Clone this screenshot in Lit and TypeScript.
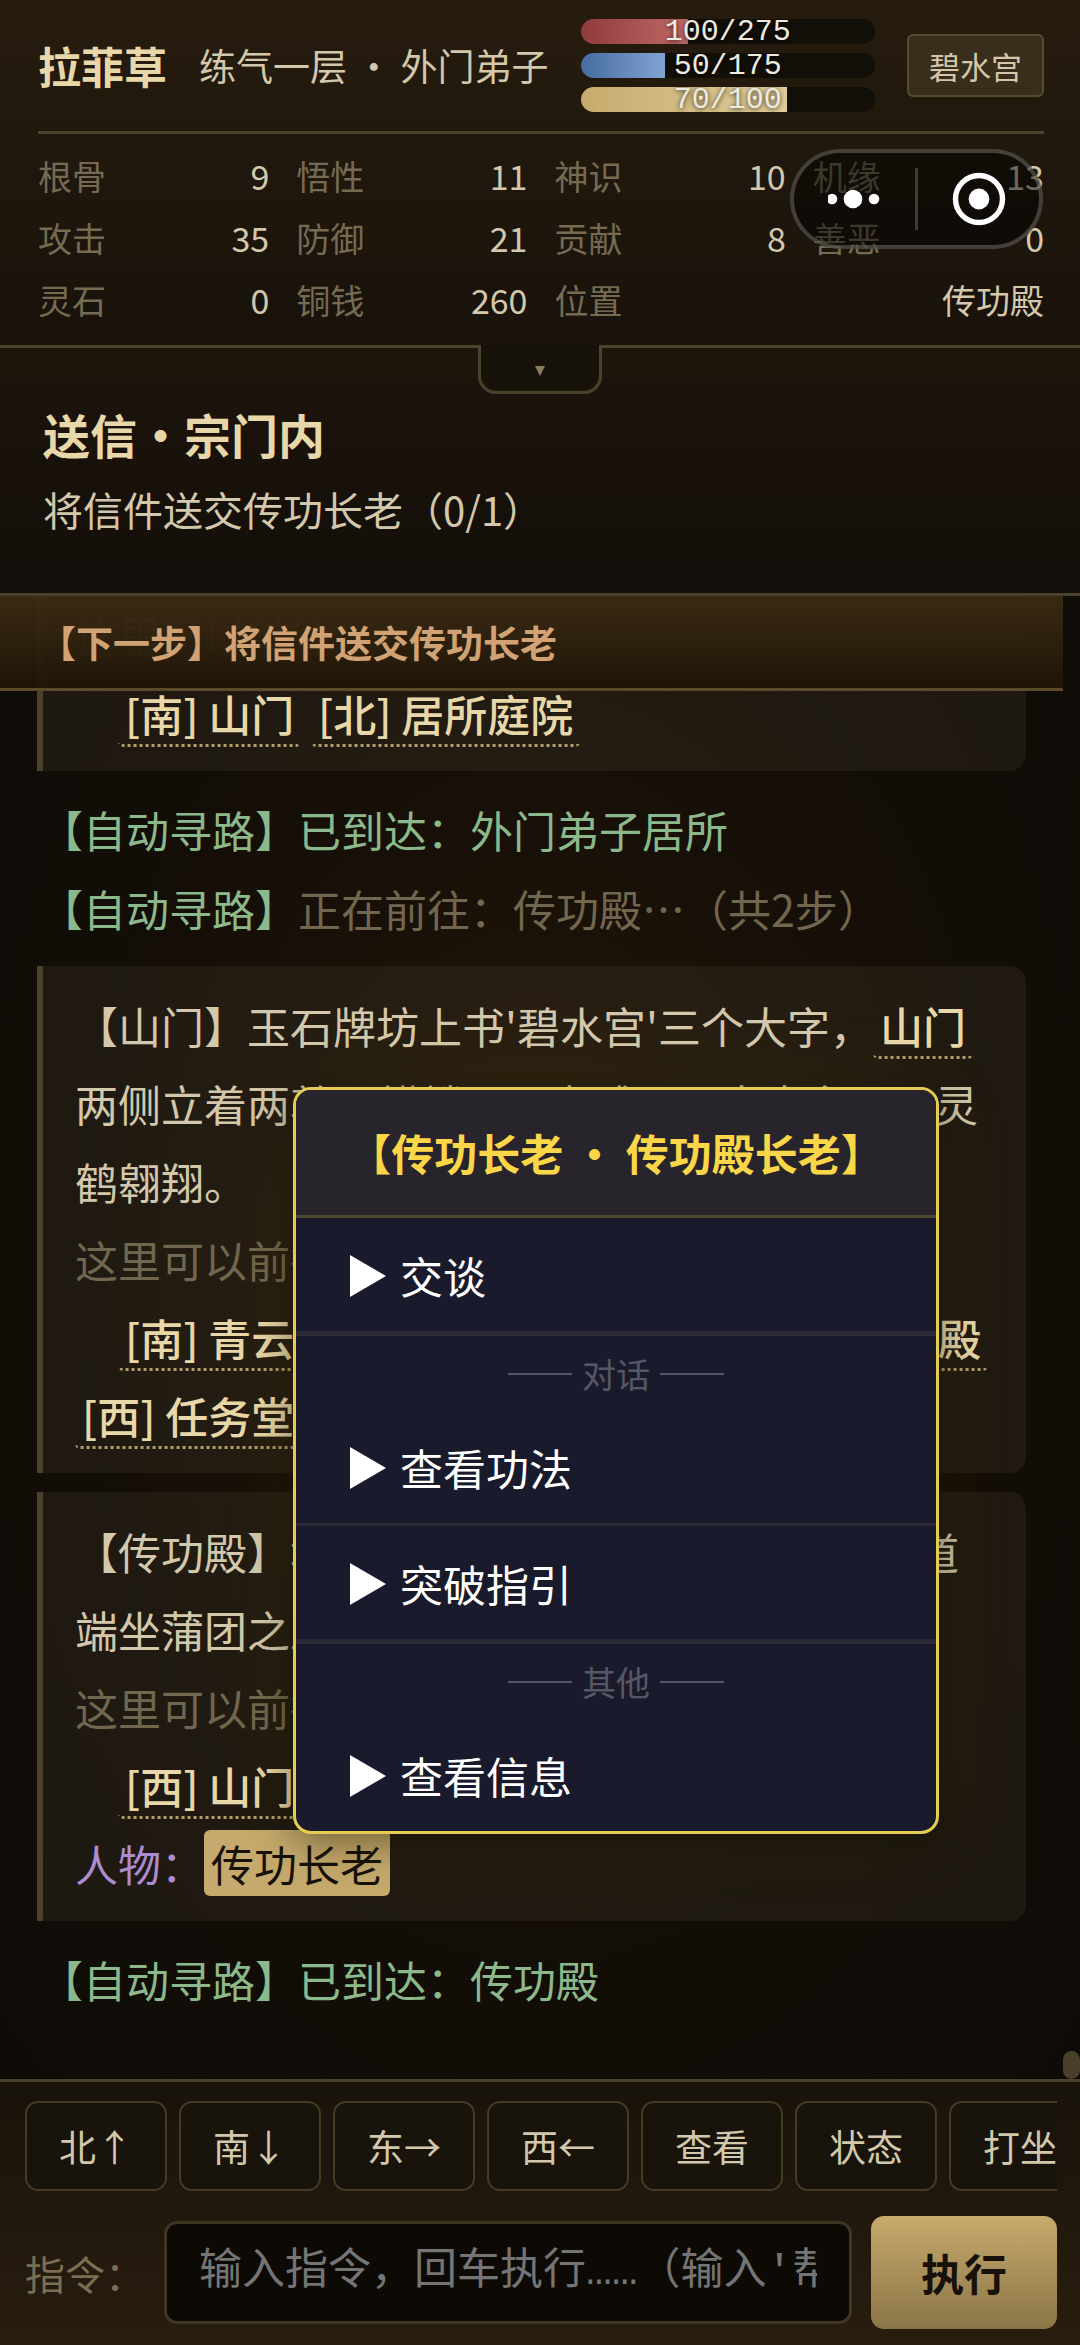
import { LitElement, html, css, svg, nothing } from "lit";
import { customElement, property, state } from "lit/decorators.js";

interface Stat {
  label: string;
  value: string;
  wide?: boolean;
}

const STATS: Stat[] = [
  { label: "根骨", value: "9" },
  { label: "悟性", value: "11" },
  { label: "神识", value: "10" },
  { label: "机缘", value: "13" },
  { label: "攻击", value: "35" },
  { label: "防御", value: "21" },
  { label: "贡献", value: "8" },
  { label: "善恶", value: "0" },
  { label: "灵石", value: "0" },
  { label: "铜钱", value: "260" },
  { label: "位置", value: "传功殿", wide: true },
];

const GAUGES = [
  { kind: "hp", name: "气血", now: 100, max: 275 },
  { kind: "mp", name: "内力", now: 50, max: 175 },
  { kind: "sp", name: "精力", now: 70, max: 100 },
];

const QUICK = ["北↑", "南↓", "东→", "西←", "查看", "状态", "打坐"];

const FONT = css`"Noto Sans CJK SC", "Noto Sans", sans-serif`;

/** Name, rank, gauges and attribute table at the top of the page. */
@customElement("player-header")
class PlayerHeader extends LitElement {
  static styles = css`
    :host {
      display: block;
      position: relative;
      z-index: 2;
      padding: 19px 36px 19px 38px;
      background: linear-gradient(#261c0e, #1f170d 55%, #18120b);
      border-bottom: 3px solid #4c422c;
    }
    .top {
      display: flex;
      align-items: center;
      gap: 32px;
      padding-bottom: 19px;
      border-bottom: 3px solid #4d432d;
    }
    .name {
      margin: 0;
      padding-bottom: 2px;
      font-size: 43px;
      line-height: 60px;
      font-weight: 700;
      color: #e8d7a8;
      white-space: nowrap;
    }
    .rank {
      padding-bottom: 2px;
      font-size: 37px;
      line-height: 60px;
      white-space: nowrap;
    }
    .gauges {
      flex: 1;
      display: flex;
      flex-direction: column;
      gap: 9px;
      min-width: 0;
    }
    .gauge {
      position: relative;
      height: 25px;
      border-radius: 13px;
      background: #120e08;
      overflow: hidden;
    }
    .fill {
      height: 100%;
    }
    .hp {
      background: linear-gradient(90deg, #8f3a3c, #c06a68);
    }
    .mp {
      background: linear-gradient(90deg, #466c9f, #80a4d2);
    }
    .sp {
      background: linear-gradient(90deg, #c6ab6e, #e0cd98);
    }
    .count {
      position: absolute;
      inset: 0;
      text-align: center;
      font: 30px/26px "Liberation Mono", monospace;
      color: #eeeae0;
      text-shadow: 0 1px 5px rgba(0, 0, 0, 0.8);
    }
    .sect {
      padding: 0 20px;
      font-size: 31px;
      line-height: 59px;
      border: 2px solid #574a31;
      border-radius: 6px;
      background: #392d1c;
      white-space: nowrap;
    }
    .stats {
      display: grid;
      grid-template-columns: repeat(4, 1fr);
      gap: 10px 27px;
      margin: 0;
      padding-top: 16px;
    }
    .stat {
      display: flex;
      justify-content: space-between;
      font-size: 34px;
      line-height: 52px;
    }
    .wide {
      grid-column: span 2;
    }
    dt {
      color: #766b52;
    }
    dd {
      margin: 0;
    }
    .fold {
      position: absolute;
      top: 100%;
      left: 50%;
      translate: -50% 0;
      display: grid;
      place-items: center;
      width: 124px;
      height: 49px;
      padding: 5px 0 0;
      background: #17120a;
      border: 3px solid #4c422c;
      border-top: 0;
      border-radius: 0 0 18px 18px;
    }
    .fold::before {
      content: "";
      position: absolute;
      inset: -3px 0 auto;
      height: 3px;
      background: #18120b;
    }
  `;

  render() {
    return html`
      <div class="top">
        <h1 class="name">拉菲草</h1>
        <span class="rank">练气一层 · 外门弟子</span>
        <div class="gauges">
          ${GAUGES.map(
            (g) => html`<div class="gauge" role="meter" aria-label=${g.name} aria-valuenow=${g.now} aria-valuemax=${g.max}>
              <div class="fill ${g.kind}" style="width:${(g.now / g.max) * 100}%"></div>
              <div class="count">${g.now}/${g.max}</div>
            </div>`
          )}
        </div>
        <span class="sect">碧水宫</span>
      </div>
      <dl class="stats">
        ${STATS.map(
          (s) => html`<div class="stat ${s.wide ? "wide" : ""}"><dt>${s.label}</dt><dd>${s.value}</dd></div>`
        )}
      </dl>
      <button class="fold" aria-label="展开">
        <svg width="10" height="10" viewBox="0 0 10 10"><path d="M0 0H10L5 10Z" fill="#8a7d60" /></svg>
      </button>
    `;
  }
}

/** Mini-program capsule floating above the header. */
@customElement("capsule-menu")
class CapsuleMenu extends LitElement {
  static styles = css`
    :host {
      display: flex;
      align-items: center;
      box-sizing: border-box;
      width: 253px;
      height: 100px;
      border: 4px solid rgba(120, 115, 105, 0.5);
      border-radius: 50px;
      background: rgba(0, 0, 0, 0.48);
    }
    button {
      flex: 1;
      height: 100%;
      display: grid;
      place-items: center;
      padding: 0;
      border: 0;
      background: none;
    }
    .bar {
      width: 3px;
      height: 62px;
      background: #403b33;
    }
  `;

  render() {
    return html`
      <button aria-label="更多">
        <svg width="54" height="20" viewBox="0 0 54 20" fill="#fff">
          <circle cx="4" cy="10" r="5.3" /><circle cx="25" cy="10" r="9.3" /><circle cx="46" cy="10" r="5.3" />
        </svg>
      </button>
      <span class="bar"></span>
      <button aria-label="关闭">
        <svg width="54" height="54" viewBox="0 0 54 54">
          <circle cx="27" cy="27" r="23.5" fill="none" stroke="#fff" stroke-width="5.4" />
          <circle cx="27" cy="27" r="10.4" fill="#fff" />
        </svg>
      </button>
    `;
  }
}

interface MenuGroup {
  title?: string;
  items: string[];
}

/** Action menu opened from a character's name. */
@customElement("npc-menu")
class NpcMenu extends LitElement {
  @property() heading = "";
  @property({ attribute: false }) groups: MenuGroup[] = [];

  static styles = css`
    :host {
      display: block;
      box-sizing: border-box;
      border: 3px solid #e6cc55;
      border-radius: 18px;
      background: #191a2b;
      overflow: hidden;
      box-shadow: 0 0 90px rgba(255, 215, 0, 0.07), 0 6px 44px rgba(0, 0, 0, 0.5);
    }
    h2 {
      margin: 0;
      padding: 23px 0 24px;
      font-size: 43px;
      line-height: 78px;
      font-weight: 700;
      text-align: center;
      color: #fad648;
      background: #27242b;
      border-bottom: 3px solid #4c462f;
    }
    .item {
      display: flex;
      align-items: center;
      gap: 14px;
      width: 100%;
      padding: 25px 54px 23px;
      border: 0;
      border-bottom: 3px solid #2a2a34;
      background: none;
      font: inherit;
      font-size: 43px;
      line-height: 65px;
      color: #fff;
      text-align: left;
    }
    .item.last {
      border-bottom: 0;
    }
    .title {
      display: flex;
      align-items: center;
      justify-content: center;
      gap: 10px;
      padding: 13px 0 11px;
      border-top: 2px solid #2e2c35;
      font-size: 34px;
      line-height: 50px;
      color: #565764;
    }
    .dash {
      width: 64px;
      height: 2px;
      background: #565764;
    }
  `;

  render() {
    return html`
      <h2>${this.heading}</h2>
      ${this.groups.map(
        (g, gi) => html`
          ${g.title
            ? html`<div class="title"><span class="dash"></span>${g.title}<span class="dash"></span></div>`
            : nothing}
          ${g.items.map(
            (name, i) => html`<button
              class="item ${gi === this.groups.length - 1 && i === g.items.length - 1 ? "last" : ""}"
            >
              ${svg`<svg width="36" height="42" viewBox="0 0 36 42"><path d="M0 0L36 21L0 42Z" fill="#fff"/></svg>`}${name}
            </button>`
          )}
        `
      )}
    `;
  }
}

@customElement("app-root")
class AppRoot extends LitElement {
  @state() private command = "";

  private groups: MenuGroup[] = [
    { items: ["交谈"] },
    { title: "对话", items: ["查看功法", "突破指引"] },
    { title: "其他", items: ["查看信息"] },
  ];

  static styles = css`
    :host {
      display: block;
      font-family: ${FONT};
      color: #d3c8ac;
      background: #0f0c07;
    }
    .page {
      position: relative;
      display: flex;
      flex-direction: column;
      min-height: 100vh;
    }
    .capsule {
      position: absolute;
      z-index: 3;
      top: 149px;
      right: 37px;
    }
    .quest {
      padding: 51px 43px 49px;
      background: linear-gradient(#1e150c, #120e09);
      border-bottom: 3px solid #4a402c;
    }
    .quest h2 {
      margin: 0;
      font-size: 47px;
      line-height: 70px;
      font-weight: 700;
      color: #e8d7a8;
    }
    .quest p {
      margin: 0;
      padding-top: 5px;
      font-size: 40px;
      line-height: 70px;
    }
    .story {
      flex: 1;
      position: relative;
      display: flex;
      background: radial-gradient(ellipse at 50% 45%, #201606 0%, #191108 35%, #120d07 65%, #0f0c07 100%);
    }
    .log {
      flex: 1;
      min-width: 0;
      overflow: hidden;
      font-size: 43px;
      line-height: 78px;
    }
    .next {
      position: relative;
      z-index: 1;
      padding: 0 39px;
      font-size: 37px;
      line-height: 92px;
      font-weight: 700;
      color: #d0a274;
      background: linear-gradient(rgba(59, 43, 19, 0.96), rgba(31, 21, 7, 0.96));
      border-bottom: 3px solid #5c4b2b;
    }
    .entries {
      display: flex;
      flex-direction: column;
      gap: 19px;
      padding: 0 37px;
    }
    .card {
      padding: 20px 32px 19px;
      border-left: 6px solid #4c422c;
      border-radius: 0 16px 16px 0;
      background: rgba(255, 235, 200, 0.055);
    }
    .scrolled {
      margin-top: -115px;
    }
    .card p,
    .lines p {
      margin: 0;
    }
    .lines {
      display: grid;
      gap: 1px;
      padding-left: 3px;
    }
    .hint {
      color: #71664e;
    }
    .sys {
      color: #8cb98b;
    }
    .who {
      color: #ab8cd0;
    }
    .link {
      padding: 0 7px;
      font-weight: 500;
      color: #e8d7a8;
      text-decoration: none;
      white-space: nowrap;
      border-bottom: 3px dotted #b59d67;
      border-radius: 5px;
    }
    .npc {
      padding: 1px 7px;
      border: 0;
      border-radius: 6px;
      background: #c6aa6d;
      color: #17110a;
      font: inherit;
      line-height: 64px;
    }
    .track {
      width: 17px;
      display: flex;
      flex-direction: column;
      justify-content: flex-end;
    }
    .thumb {
      height: 28px;
      border-radius: 9px;
      background: #4a4029;
    }
    .menu {
      position: absolute;
      z-index: 2;
      top: 491px;
      right: 141px;
      width: 646px;
    }
    .controls {
      padding: 19px 23px 16px 25px;
      border-top: 3px solid #4a402c;
      background: linear-gradient(#18130b, #21180d 50%, #281d0e);
    }
    .quick {
      display: flex;
      gap: 12px;
      overflow: hidden;
    }
    .quick button {
      flex: none;
      padding: 0 32px;
      border: 2px solid #453b25;
      border-radius: 13px;
      background: #18130b;
      color: inherit;
      font: inherit;
      font-size: 37px;
      line-height: 86px;
    }
    .entry {
      display: flex;
      align-items: center;
      gap: 19px;
      padding-top: 25px;
    }
    .entry label {
      font-size: 40px;
      line-height: 60px;
      color: #7a6e53;
    }
    .entry input {
      flex: 1;
      min-width: 0;
      box-sizing: border-box;
      height: 103px;
      padding: 0 32px;
      border: 3px solid #3e3522;
      border-radius: 13px;
      outline: 0;
      background: #0d0a06;
      color: #d3c8ac;
      font: 43px "Liberation Mono", "Noto Sans CJK SC", monospace;
    }
    .entry input::placeholder {
      color: #757575;
      opacity: 1;
    }
    .run {
      padding: 0 50px;
      border: 0;
      border-radius: 13px;
      background: linear-gradient(#c6aa6d, #8b7547);
      color: #17110a;
      font: inherit;
      font-size: 43px;
      font-weight: 700;
      line-height: 113px;
    }
  `;

  private onInput(e: Event) {
    this.command = (e.target as HTMLInputElement).value;
  }

  private link(text: string) {
    return html`<a class="link" href="#">${text}</a>`;
  }

  render() {
    return html`
      <div class="page">
        <player-header></player-header>
        <capsule-menu class="capsule"></capsule-menu>

        <section class="quest">
          <h2>送信·宗门内</h2>
          <p>将信件送交传功长老（0/1）</p>
        </section>

        <main class="story">
          <div class="log">
            <div class="next">【下一步】将信件送交传功长老</div>
            <div class="entries">
              <article class="card scrolled">
                <p class="hint">这里可以前往：</p>
                <p>　${this.link("[南] 山门")} ${this.link("[北] 居所庭院")}</p>
              </article>
              <div class="lines">
                <p class="sys">【自动寻路】已到达：外门弟子居所</p>
                <p class="hint"><span class="sys">【自动寻路】</span>正在前往：传功殿…（共2步）</p>
              </div>
              <article class="card">
                <p>
                  【山门】玉石牌坊上书'碧水宫'三个大字，${this.link("山门")}两侧立着两尊石麒麟，目光威严，古木参天，灵鹤翱翔。
                </p>
                <p class="hint">这里可以前往：</p>
                <p>　${this.link("[南] 青云山道")} ${this.link("[北] 外门弟子居所")} ${this.link("[东] 传功殿")} ${this.link("[西] 任务堂")}</p>
              </article>
              <article class="card">
                <p>【传功殿】墙上悬'法'字匾额，檀香袅袅，老道端坐蒲团之上，闭目养神。</p>
                <p class="hint">这里可以前往：</p>
                <p>　${this.link("[西] 山门")}</p>
                <p><span class="who">人物：</span><button class="npc">传功长老</button></p>
              </article>
              <div class="lines">
                <p class="sys">【自动寻路】已到达：传功殿</p>
              </div>
            </div>
          </div>
          <div class="track"><div class="thumb"></div></div>
          <npc-menu class="menu" role="dialog" heading="【传功长老 · 传功殿长老】" .groups=${this.groups}></npc-menu>
        </main>

        <footer class="controls">
          <div class="quick">${QUICK.map((q) => html`<button>${q}</button>`)}</div>
          <div class="entry">
            <label for="cmd">指令：</label>
            <input
              id="cmd"
              type="text"
              placeholder="输入指令，回车执行……（输入'帮助'查看）"
              .value=${this.command}
              @input=${this.onInput}
            />
            <button class="run">执行</button>
          </div>
        </footer>
      </div>
    `;
  }
}
